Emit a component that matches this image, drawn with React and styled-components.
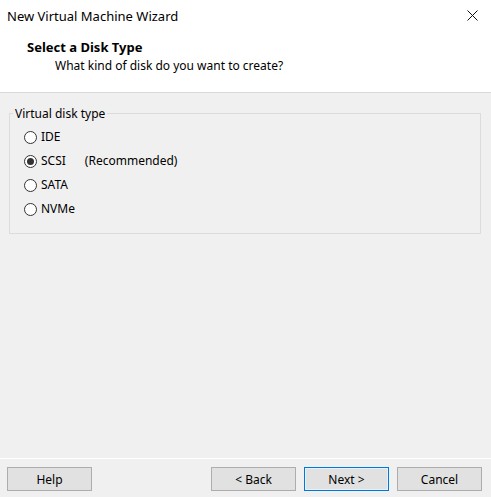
import styled, { createGlobalStyle } from "styled-components";

const GlobalStyle = createGlobalStyle`
  html, body {
    margin: 0;
    padding: 0;
    background: #f0f0f0;
  }
  body {
    font-family: "Noto Sans", "Liberation Sans", sans-serif;
    font-size: 12px;
    color: #000;
  }
`;

const diskTypes = [
  { id: "ide", label: "IDE" },
  { id: "scsi", label: "SCSI", note: "(Recommended)", checked: true },
  { id: "sata", label: "SATA" },
  { id: "nvme", label: "NVMe" },
];

const App = () => {
  return (
    <>
      <GlobalStyle />
      <Window>
        <TitleBar>
          <Title>New Virtual Machine Wizard</Title>
          <CloseButton aria-label="Close">
            <svg width="11" height="11" viewBox="0 0 11 11">
              <path d="M0.5 0.5 L10.5 10.5 M10.5 0.5 L0.5 10.5" stroke="#111" strokeWidth="1" />
            </svg>
          </CloseButton>
        </TitleBar>
        <Header>
          <HeaderTitle>Select a Disk Type</HeaderTitle>
          <HeaderSub>What kind of disk do you want to create?</HeaderSub>
        </Header>
        <Body>
          <GroupBox>
            <Legend>Virtual disk type</Legend>
            <RadioList>
              {diskTypes.map((d) => (
                <RadioRow key={d.id}>
                  <RadioCircle $checked={d.checked} />
                  <RadioLabel>{d.label}</RadioLabel>
                  {d.note && <RadioNote>{d.note}</RadioNote>}
                </RadioRow>
              ))}
            </RadioList>
          </GroupBox>
        </Body>
        <Footer>
          <Button>Help</Button>
          <Spacer />
          <Button>&lt; Back</Button>
          <Button $default>Next &gt;</Button>
          <Button>Cancel</Button>
        </Footer>
      </Window>
    </>
  );
};

const Window = styled.div`
  width: 491px;
  height: 497px;
  display: flex;
  flex-direction: column;
  background: #f0f0f0;
  overflow: hidden;
`;

const TitleBar = styled.div`
  height: 31px;
  display: flex;
  align-items: center;
  justify-content: space-between;
  background: #fff;
  padding: 0 0 0 7px;
`;

const Title = styled.div`
  font-size: 13px;
  line-height: 16px;
  color: #000;
  margin-top: 1px;
`;

const CloseButton = styled.div`
  width: 38px;
  height: 31px;
  display: flex;
  align-items: center;
  justify-content: center;
`;

const Header = styled.div`
  height: 62px;
  background: #fff;
  border-bottom: 1px solid #dadada;
  padding: 8px 0 0 27px;
  box-sizing: border-box;
  display: flex;
  flex-direction: column;
`;

const HeaderTitle = styled.div`
  font-weight: bold;
  font-size: 13px;
  line-height: 16px;
`;

const HeaderSub = styled.div`
  font-size: 12px;
  line-height: 16px;
  margin-left: 28px;
  margin-top: 3px;
`;

const Body = styled.div`
  flex: 1;
  padding: 20px 10px 0 9px;
`;

const GroupBox = styled.div`
  position: relative;
  height: 121px;
  border: 1px solid #dcdcdc;
  box-sizing: border-box;
  padding: 15px 0 0 14px;
`;

const Legend = styled.div`
  position: absolute;
  top: -8px;
  left: 3px;
  padding: 0 2px;
  background: #f0f0f0;
  line-height: 16px;
`;

const RadioList = styled.div`
  display: flex;
  flex-direction: column;
  gap: 8px;
`;

const RadioRow = styled.div`
  display: flex;
  align-items: center;
  height: 16px;
`;

const RadioCircle = styled.span`
  width: 13px;
  height: 13px;
  box-sizing: border-box;
  border: 1px solid #333;
  border-radius: 50%;
  background: #fff;
  display: flex;
  align-items: center;
  justify-content: center;
  margin-right: 4px;

  &::after {
    content: "";
    width: 7px;
    height: 7px;
    border-radius: 50%;
    background: #333;
    display: ${(p) => (p.$checked ? "block" : "none")};
  }
`;

const RadioLabel = styled.span`
  line-height: 16px;
`;

const RadioNote = styled.span`
  margin-left: 19px;
  line-height: 16px;
`;

const Footer = styled.div`
  height: 39px;
  border-top: 1px solid #fff;
  display: flex;
  align-items: flex-start;
  padding: 8px 9px 0 7px;
  gap: 8px;
  box-sizing: border-box;
`;

const Spacer = styled.div`
  flex: 1;
`;

const Button = styled.button`
  width: 85px;
  height: 24px;
  background: #e1e1e1;
  border: 1px solid ${(p) => (p.$default ? "#0078d7" : "#adadad")};
  box-shadow: ${(p) => (p.$default ? "inset 0 0 0 1px #e5f1fb" : "none")};
  font-family: "Noto Sans", "Liberation Sans", sans-serif;
  font-size: 12px;
  color: #000;
  padding: 0;
  cursor: pointer;
`;

export default App;
